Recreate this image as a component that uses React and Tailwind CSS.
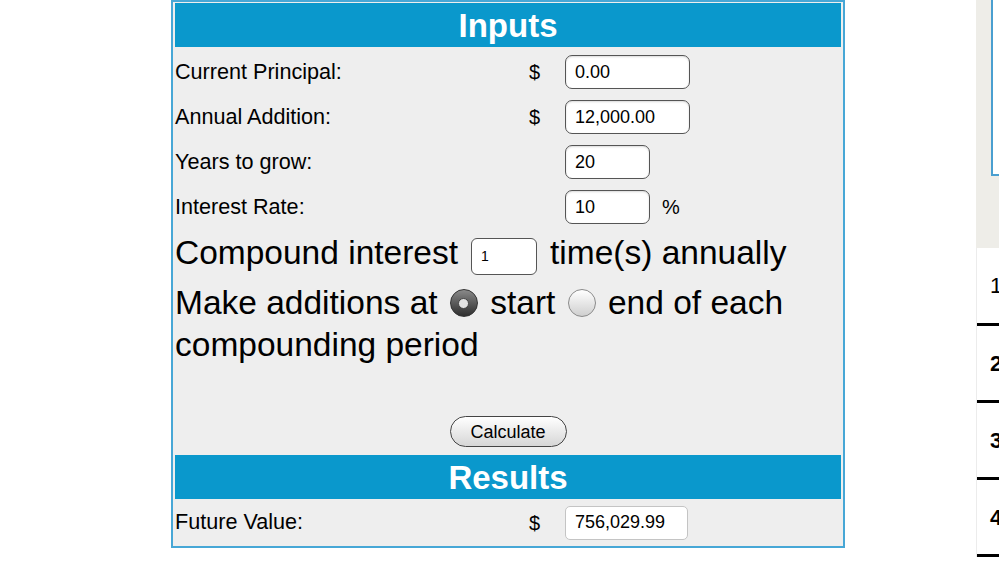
import { useState } from 'react';

// Savings calculator form - inputs + results panel
const Field = ({ label, prefix, value, width = 'w-[125px]', suffix }) => (
    <div className="flex items-center h-[45px]">
        <span className="w-[354px] text-[21.6px]">{label}</span>
        <span className="w-[36px] text-[20px]">{prefix}</span>
        <input
            readOnly
            value={value}
            className={`${width} h-[34px] rounded-[7px] border-[1.5px] border-[#555] bg-white pl-[9px] text-[18px] shadow-[inset_0_1px_2px_rgba(0,0,0,0.15)] outline-none`}
        />
        {suffix && <span className="ml-[12px] text-[20px]">{suffix}</span>}
    </div>
);

const Radio = ({ checked }) =>
    checked ? (
        <span className="inline-flex align-middle mx-[3px] w-[28px] h-[28px] rounded-full border border-[#333] bg-gradient-to-b from-[#8a8a8a] to-[#2f2f2f] items-center justify-center -translate-y-[2px]">
            <span className="w-[11px] h-[11px] rounded-full bg-[#e2e2e2] border border-[#444]" />
        </span>
    ) : (
        <span className="inline-block align-middle mx-[3px] w-[28px] h-[28px] rounded-full border border-[#8a8a8a] bg-gradient-to-b from-white to-[#cfcfcf] -translate-y-[2px]" />
    );

const App = () => {
    const [atStart] = useState(true);

    return (
        <div
            className="w-[999px] h-[562px] overflow-hidden bg-white flex text-black"
            style={{ fontFamily: '"Liberation Sans", Arial, sans-serif' }}
        >
            <div className="ml-[171px] w-[674px] h-[548px] border-2 border-[#47a7d6] bg-[#eeeeee] px-[2px] pt-[1px] flex flex-col">
                {/* Inputs header */}
                <div className="h-[44px] bg-[#0a98cc] flex items-center justify-center">
                    <span className="text-white font-bold text-[33px] leading-none">Inputs</span>
                </div>

                <div className="pt-[2.5px]">
                    <Field label="Current Principal:" prefix="$" value="0.00" />
                    <Field label="Annual Addition:" prefix="$" value="12,000.00" />
                    <Field label="Years to grow:" value="20" width="w-[85px]" />
                    <Field label="Interest Rate:" value="10" width="w-[85px]" suffix="%" />
                </div>

                <div className="h-[48px] flex items-center text-[33.5px] whitespace-nowrap">
                    <span>Compound interest</span>
                    <input
                        readOnly
                        value="1"
                        className="mx-[13px] mt-[5px] w-[66px] h-[37px] rounded-[6px] border-[1.5px] border-[#555] bg-white pl-[9px] text-[14px] outline-none"
                    />
                    <span>time(s) annually</span>
                </div>

                <p className="mt-[4.5px] text-[33.5px] leading-[42px]">
                    Make additions at <Radio checked={atStart} />
                    {' '}start <Radio checked={!atStart} />
                    {' '}end of each compounding period
                </p>

                <div className="mt-[50px] flex justify-center">
                    <button className="w-[117px] h-[31px] rounded-full border-[1.5px] border-[#444] bg-gradient-to-b from-white to-[#d6d6d6] text-[18px] leading-none">
                        Calculate
                    </button>
                </div>

                {/* Results header */}
                <div className="mt-[8px] h-[44px] bg-[#0a98cc] flex items-center justify-center">
                    <span className="text-white font-bold text-[33px] leading-none">Results</span>
                </div>

                <div className="flex items-center h-[47px]">
                    <span className="w-[354px] text-[21.6px]">Future Value:</span>
                    <span className="w-[36px] text-[20px]">$</span>
                    <input
                        readOnly
                        value="756,029.99"
                        className="w-[123px] h-[34px] rounded-[5px] border border-[#c4c4c4] bg-white pl-[9px] text-[18px] outline-none"
                    />
                </div>
            </div>

            {/* Cut-off neighbouring column */}
            <div className="ml-auto w-[23px] flex flex-col">
                <div className="h-[248px] bg-[#eeede8] pl-[15px]">
                    <div className="h-[176px] bg-white border-l-2 border-b-2 border-[#4a9fd0]" />
                </div>
                <div className="border-l border-[#ececec] pl-[13px] text-[22px] font-bold whitespace-nowrap">
                    <div className="h-[75px] flex items-center font-normal">1</div>
                    <div className="border-t-[3px] border-black -ml-[13px]" />
                    <div className="h-[74px] flex items-center">2</div>
                    <div className="border-t-[3px] border-black -ml-[13px]" />
                    <div className="h-[74px] flex items-center">3</div>
                    <div className="border-t-[3px] border-black -ml-[13px]" />
                    <div className="h-[74px] flex items-center">4</div>
                    <div className="border-t-[3px] border-black -ml-[13px]" />
                </div>
            </div>
        </div>
    );
};

export default App;
